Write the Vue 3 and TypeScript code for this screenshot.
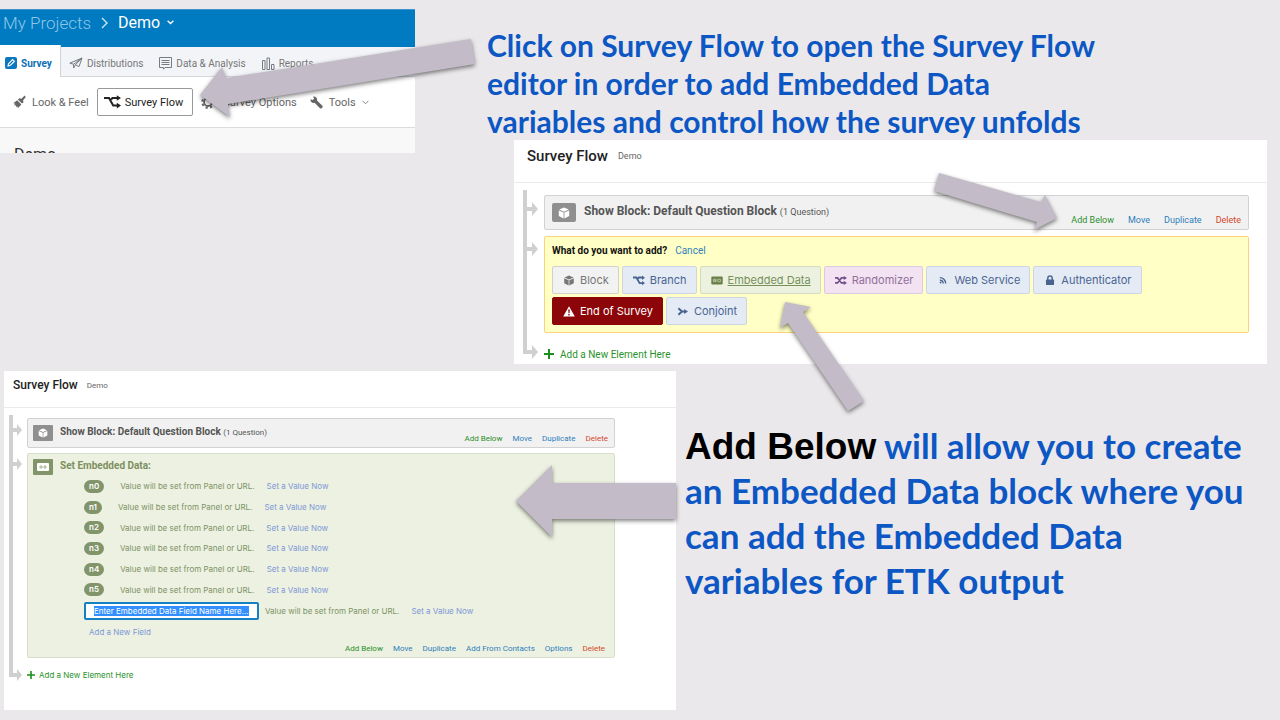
<script setup lang="ts">
import { onMounted, ref } from 'vue'

interface ElementKind {
  label: string
  icon: string
  tone: string
}

interface Action {
  label: string
  tone: string
}

const elementKinds: ElementKind[] = [
  { label: 'Block', icon: 'cube', tone: 'grey' },
  { label: 'Branch', icon: 'branch', tone: 'blue' },
  { label: 'Embedded Data', icon: 'data', tone: 'green' },
  { label: 'Randomizer', icon: 'shuffle', tone: 'pink' },
  { label: 'Web Service', icon: 'feed', tone: 'blue' },
  { label: 'Authenticator', icon: 'lock', tone: 'blue' },
  { label: 'End of Survey', icon: 'warning', tone: 'red' },
  { label: 'Conjoint', icon: 'conjoint', tone: 'blue' },
]

const blockActions: Action[] = [
  { label: 'Add Below', tone: 'add' },
  { label: 'Move', tone: 'plain' },
  { label: 'Duplicate', tone: 'plain' },
  { label: 'Delete', tone: 'delete' },
]

const dataActions: Action[] = [
  { label: 'Add Below', tone: 'add' },
  { label: 'Move', tone: 'plain' },
  { label: 'Duplicate', tone: 'plain' },
  { label: 'Add From Contacts', tone: 'plain' },
  { label: 'Options', tone: 'plain' },
  { label: 'Delete', tone: 'delete' },
]

const fields: string[] = ['n0', 'n1', 'n2', 'n3', 'n4', 'n5']
const newField = ref('Enter Embedded Data Field Name Here...')
const fieldInput = ref<HTMLInputElement | null>(null)

onMounted(() => {
  fieldInput.value?.focus({ preventScroll: true })
  fieldInput.value?.select()
})
</script>

<template>
  <main class="slide">
    <svg class="defs" width="0" height="0" aria-hidden="true">
      <symbol id="cube" viewBox="0 0 12 12">
        <path d="M6 0.6 10.9 2.6 6 4.8 1.1 2.6Z M0.8 3.5 5.6 5.6V11.4L0.8 9.1Z M11.2 3.5 6.4 5.6V11.4L11.2 9.1Z" fill="currentColor" />
      </symbol>
      <symbol id="branch" viewBox="0 0 12 10">
        <path d="M0 2H3.4L6.6 7.6H9.5M5 3.2 5.8 2H9.5" fill="none" stroke="currentColor" stroke-width="1.8" />
        <path d="M9 0 12 2.2 9 4.4Z M9 5.4 12 7.6 9 9.8Z" fill="currentColor" />
      </symbol>
      <symbol id="data" viewBox="0 0 12 10">
        <rect x="0.3" y="1" width="11.4" height="8" rx="1" fill="currentColor" />
        <path d="M2.4 3.8H5V6.2H2.4ZM3.4 5H5M6.8 3.8H9.4V6.2H6.8Z" fill="none" stroke="#dfe7cf" stroke-width="0.6" />
      </symbol>
      <symbol id="shuffle" viewBox="0 0 13 10">
        <path d="M0 2.2H2.8L7 7.6H10M0 7.6H2.8L7 2.2H10" fill="none" stroke="currentColor" stroke-width="1.8" />
        <path d="M9.5 0 13 2.2 9.5 4.4Z M9.5 5.4 13 7.6 9.5 9.8Z" fill="currentColor" />
      </symbol>
      <symbol id="feed" viewBox="0 0 12 12">
        <path d="M2.5 2.8C6 2.8 8.9 5.6 8.9 9.2M2.5 5.6C4.6 5.6 6.2 7.2 6.2 9.2" fill="none" stroke="currentColor" stroke-width="1.5" />
        <circle cx="3.4" cy="8.2" r="1" fill="currentColor" />
      </symbol>
      <symbol id="lock" viewBox="0 0 10 12">
        <path d="M2.6 5.5V3.6A2.4 2.4 0 0 1 7.4 3.6V5.5" fill="none" stroke="currentColor" stroke-width="1.6" />
        <rect x="0.6" y="5" width="8.8" height="6" rx="0.8" fill="currentColor" />
      </symbol>
      <symbol id="warning" viewBox="0 0 12 11">
        <path fill-rule="evenodd" d="M6 0.3 11.8 10.4H0.2ZM5.2 3.6 5.5 7.2H6.5L6.8 3.6ZM5.3 8H6.7V9.4H5.3Z" fill="currentColor" />
      </symbol>
      <symbol id="conjoint" viewBox="0 0 12 10">
        <path d="M1.4 1.8 5 5 1.4 8.2M4 5H8" fill="none" stroke="currentColor" stroke-width="2" />
        <path d="M7.2 2.4 11 5 7.2 7.6Z" fill="currentColor" />
      </symbol>
    </svg>

    <div class="top">
      <section class="project">
        <nav class="crumbs" aria-label="Breadcrumb">
          <a href="#projects" class="crumb-root">My Projects</a>
          <svg width="7" height="12" viewBox="0 0 7 12"><path d="M1 1 6 6 1 11" fill="none" stroke="#cfe6f5" stroke-width="1.4" /></svg>
          <button type="button" class="crumb-here">
            Demo
            <svg width="7" height="5" viewBox="0 0 7 5"><path d="M0.6 0.8 3.5 3.6 6.4 0.8" fill="none" stroke="#fff" stroke-width="1.4" /></svg>
          </button>
        </nav>
        <nav class="tabs" aria-label="Project sections">
          <a href="#survey" class="tab current">
            <svg width="12" height="12" viewBox="0 0 12 12"><rect width="12" height="12" rx="2" fill="#0b78bd" /><path d="M3 9 3.5 6.8 7.6 2.6 9.4 4.4 5.2 8.5Z" fill="none" stroke="#fff" stroke-width="1.1" /></svg>
            Survey
          </a>
          <a href="#distributions" class="tab">
            <svg width="14" height="12" viewBox="0 0 14 12"><path d="M0.8 6.2 13 1 10 9.6 6.4 7.8 13 1 4.6 7.2ZM4.6 7.2V11L6.4 7.8" fill="none" stroke="#777c84" stroke-width="1" /></svg>
            Distributions
          </a>
          <a href="#analysis" class="tab">
            <svg width="13" height="14" viewBox="0 0 13 14"><path d="M0.5 1.5H12.5V11.5H6L4.5 13.2V11.5H0.5ZM2.5 4.5H10.5M2.5 6.5H10.5M2.5 8.5H10.5" fill="none" stroke="#777c84" /></svg>
            Data &amp; Analysis
          </a>
          <a href="#reports" class="tab">
            <svg width="13" height="13" viewBox="0 0 13 13"><path d="M0.5 3.5H3V12.5H0.5ZM5 1H7.5V12.5H5ZM9.5 7.5H12V12.5H9.5Z" fill="none" stroke="#777c84" /></svg>
            Reports
          </a>
        </nav>
        <div class="tools">
          <button type="button" class="tool">
            <svg width="13" height="14" viewBox="0 0 13 14"><path d="M8.4 3.8 11.6 0.6 12.8 2 10 5.4 10.6 7.2 9 8.6 4.9 4.4 6.4 3.2ZM4.2 5.2 8.4 9.4 4.8 13.2 4.6 11.6 3.2 12 3 10.2 1.2 10.4 2 8.6 0.2 8.2Z" fill="#666" /></svg>
            Look &amp; Feel
          </button>
          <button type="button" class="tool boxed">
            <svg width="17" height="14" viewBox="0 0 17 14"><path d="M0 3H5L9.2 10.6H13.5M7.2 4.6 8.4 3H13.5" fill="none" stroke="#222" stroke-width="2" /><path d="M12.8 0.2 17 3 12.8 5.8ZM12.8 7.8 17 10.6 12.8 13.4Z" fill="#222" /></svg>
            Survey Flow
          </button>
          <button type="button" class="tool options">
            <svg width="14" height="14" viewBox="0 0 14 14"><circle cx="7" cy="7" r="4" fill="none" stroke="#666" stroke-width="1.8" /><circle cx="7" cy="7" r="5.8" fill="none" stroke="#666" stroke-width="2" stroke-dasharray="2.3 2.25" /></svg>
            Survey Options
          </button>
          <button type="button" class="tool">
            <svg width="13" height="13" viewBox="0 0 13 13"><path d="M0.6 3.2 2.8 4 4 2.8 3.2 0.6C5.6 0 7.6 2 7 4.4L12.4 9.8C13.2 11.4 11.6 13 10 12.2L4.6 6.8C2.2 7.6 0 5.6 0.6 3.2Z" fill="#666" /></svg>
            Tools
            <svg width="7" height="5" viewBox="0 0 7 5"><path d="M0.6 0.8 3.5 3.8 6.4 0.8" fill="none" stroke="#888" /></svg>
          </button>
        </div>
        <h2 class="project-name">Demo</h2>
      </section>

      <div class="intro">
        <p class="note">
          Click on Survey Flow to open the Survey Flow<br />
          editor in order to add Embedded Data<br />
          variables and control how the survey unfolds
        </p>

        <section class="panel adding">
          <header class="panel-head">
            <h2>Survey Flow</h2>
            <span>Demo</span>
          </header>
          <div class="tree">
            <svg class="rail" width="16" height="172" viewBox="0 0 16 172" aria-hidden="true">
              <path d="M2 0V162H10M2 19H10M2 59H10" fill="none" stroke="#d0d0d0" stroke-width="4" />
              <path d="M9 12 15 19 9 26ZM9 52 15 59 9 66ZM9 155 15 162 9 169Z" fill="#d0d0d0" />
            </svg>
            <div class="nodes">
              <article class="block">
                <span class="badge"><svg width="12" height="12"><use href="#cube" /></svg></span>
                <h3>Show Block: Default Question Block <small>(1 Question)</small></h3>
                <div class="actions">
                  <a v-for="a in blockActions" :key="a.label" href="#" :class="a.tone">{{ a.label }}</a>
                </div>
              </article>
              <article class="chooser">
                <p class="ask"><strong>What do you want to add?</strong><a href="#cancel">Cancel</a></p>
                <div class="kinds">
                  <button v-for="k in elementKinds" :key="k.label" type="button" class="kind" :class="k.tone">
                    <svg width="12" height="11"><use :href="'#' + k.icon" /></svg>
                    <span>{{ k.label }}</span>
                  </button>
                </div>
              </article>
              <a href="#new" class="add-element">
                <svg width="10" height="10" viewBox="0 0 10 10"><path d="M5 0V10M0 5H10" stroke="#1b8f1b" stroke-width="2" /></svg>
                Add a New Element Here
              </a>
            </div>
          </div>
        </section>
      </div>
    </div>

    <div class="bottom">
      <section class="panel small">
        <header class="panel-head">
          <h2>Survey Flow</h2>
          <span>Demo</span>
        </header>
        <div class="tree">
          <svg class="rail" width="14" height="270" viewBox="0 0 14 270" aria-hidden="true">
            <path d="M2 0V260H9M2 15H9M2 49H9" fill="none" stroke="#d0d0d0" stroke-width="4" />
            <path d="M8 9 13 15 8 21ZM8 43 13 49 8 55ZM8 254 13 260 8 266Z" fill="#d0d0d0" />
          </svg>
          <div class="nodes">
            <article class="block">
              <span class="badge"><svg width="10" height="10"><use href="#cube" /></svg></span>
              <h3>Show Block: Default Question Block <small>(1 Question)</small></h3>
              <div class="actions">
                <a v-for="a in blockActions" :key="a.label" href="#" :class="a.tone">{{ a.label }}</a>
              </div>
            </article>
            <article class="embedded">
              <div class="embedded-head">
                <span class="badge"><svg width="12" height="8" viewBox="0 0 12 8"><rect width="12" height="8" rx="1" fill="#fff" /><path d="M3 3H5V5H3ZM7 3H9V5H7Z" fill="none" stroke="#8a9b6c" stroke-width="0.7" /></svg></span>
                <h3>Set Embedded Data:</h3>
              </div>
              <ul class="fields">
                <li v-for="f in fields" :key="f">
                  <span class="pill">{{ f }}</span>
                  <span class="value">Value will be set from Panel or URL.</span>
                  <a href="#value">Set a Value Now</a>
                </li>
                <li class="editing">
                  <input ref="fieldInput" v-model="newField" type="text" aria-label="Field name" />
                  <span class="value">Value will be set from Panel or URL.</span>
                  <a href="#value">Set a Value Now</a>
                </li>
              </ul>
              <a href="#field" class="add-field">Add a New Field</a>
              <div class="actions">
                <a v-for="a in dataActions" :key="a.label" href="#" :class="a.tone">{{ a.label }}</a>
              </div>
            </article>
            <a href="#new" class="add-element">
              <svg width="8" height="8" viewBox="0 0 8 8"><path d="M4 0V8M0 4H8" stroke="#1b8f1b" stroke-width="1.6" /></svg>
              Add a New Element Here
            </a>
          </div>
        </div>
      </section>

      <p class="note large">
        <b>Add Below</b> will allow you to create<br />
        an Embedded Data block where you<br />
        can add the Embedded Data<br />
        variables for ETK output
      </p>
    </div>

    <svg class="arrows" viewBox="0 0 1280 720" preserveAspectRatio="none" aria-hidden="true">
      <g fill="#c3bbc7">
        <path d="M200 95 222 67 226 78 471 39 475 64 228 104 230 117Z" />
        <path d="M939 173 1041 202 1045 195 1057 218 1034 230 1037 222 934 191Z" />
        <path d="M785 302 811 307 803 312 864 401 848 411 788 323 780 328Z" />
        <path d="M516 501 552 465V483H676V519H552V537Z" />
      </g>
    </svg>
  </main>
</template>

<style>
body {
  background: #ebe8eb;
}
</style>

<style scoped>
* {
  box-sizing: border-box;
}

.slide {
  position: relative;
  min-height: 100vh;
  padding-top: 9px;
  overflow: hidden;
  background: #ebe8eb;
  font-family: Roboto, "Liberation Sans", sans-serif;
  color: #333;
}

.defs {
  position: absolute;
}

h2,
h3,
p,
ul {
  margin: 0;
  padding: 0;
  list-style: none;
}

a {
  color: #2f7fbd;
  text-decoration: none;
}

button {
  font: inherit;
  cursor: pointer;
}

svg {
  flex: none;
}

.top {
  display: grid;
  grid-template-columns: 415fr 865fr;
  align-items: start;
}

.project {
  height: 144px;
  overflow: hidden;
  background: #f8f8f8;
}

.crumbs {
  display: flex;
  align-items: center;
  gap: 10px;
  height: 38px;
  padding: 0 3px 12px;
  background: #007ac0;
  border-top: 1px solid #3d94cb;
}

.crumb-root {
  font-size: 17px;
  font-weight: 300;
  color: #8fc6e8;
}

.crumb-here {
  display: flex;
  align-items: center;
  gap: 7px;
  padding: 0;
  border: 0;
  background: none;
  font-size: 16px;
  color: #fff;
}

.tabs {
  display: flex;
  height: 30px;
  background: #f2f4f8;
  border-bottom: 1px solid #d6d8dc;
}

.tab {
  display: flex;
  align-items: center;
  gap: 4px;
  padding: 3px 8px 0;
  font-size: 10px;
  color: #777;
}

.tab.current {
  height: 32px;
  margin-top: -2px;
  padding: 4px 8px 0 5px;
  background: #fff;
  border-right: 1px solid #cfd2d6;
  font-weight: 700;
  color: #0b70b5;
}

.tools {
  display: flex;
  align-items: center;
  gap: 8px;
  height: 51px;
  padding-left: 13px;
  background: #fff;
  border-bottom: 1px solid #dcdcdc;
}

.tool {
  display: flex;
  align-items: center;
  gap: 6px;
  padding: 0;
  border: 0;
  background: none;
  font-size: 11px;
  color: #666;
  white-space: nowrap;
}

.tool.boxed {
  height: 28px;
  padding: 0 9px 0 6px;
  gap: 4px;
  border: 1px solid #999;
  border-radius: 2px;
  color: #222;
}

.tool.options {
  gap: 8px;
  margin-right: 5px;
}

.project-name {
  padding: 17px 14px 0;
  font-size: 16px;
  line-height: 20px;
  font-weight: 400;
}

.intro {
  padding: 17px 13px 0 72px;
}

.note {
  font-family: Lato, "Liberation Sans", sans-serif;
  font-weight: 700;
  font-size: 30px;
  line-height: 38px;
  color: #0c57c4;
  white-space: nowrap;
}

.note.large {
  padding: 52px 0 0 9px;
  font-size: 35px;
  line-height: 45px;
}

.note b {
  font-family: "Liberation Sans", sans-serif;
  font-weight: 700;
  font-size: 37px;
  line-height: 1px;
  color: #000;
}

.panel {
  background: #fff;
}

.adding {
  height: 224px;
  margin-left: 27px;
}

.panel-head {
  display: flex;
  align-items: center;
  gap: 10px;
  height: 43px;
  padding: 0 13px 10px;
  border-bottom: 1px solid #ebebeb;
}

.panel-head h2 {
  font-size: 15px;
  font-weight: 500;
  color: #222;
}

.panel-head span {
  font-size: 9px;
  color: #666;
}

.tree {
  display: flex;
  gap: 5px;
  padding: 7px 18px 0 9px;
}

.nodes {
  flex: 1;
  min-width: 0;
  padding-top: 5px;
}

.block {
  display: flex;
  gap: 8px;
  height: 35px;
  padding: 7px 7px 0;
  background: #f1f1f1;
  border: 1px solid #d2d2d2;
  border-radius: 2px;
}

.badge {
  display: flex;
  align-items: center;
  justify-content: center;
  width: 24px;
  height: 19px;
  background: #8f8f8f;
  border-radius: 2px;
  color: #fff;
}

.block h3 {
  font-size: 12px;
  line-height: 17px;
  color: #555;
  white-space: nowrap;
}

.block small {
  font-size: 9px;
  font-weight: 400;
}

.actions {
  display: flex;
  gap: 14px;
  margin-left: auto;
  align-self: flex-end;
  font-size: 9px;
  line-height: 12px;
  padding-bottom: 3px;
  white-space: nowrap;
}

.actions .add {
  color: #2a8f2a;
}

.actions .delete {
  color: #d2492a;
}

.chooser {
  height: 97px;
  margin-top: 6px;
  padding: 7px;
  background: #ffffc6;
  border: 1px solid #fbd37c;
  border-radius: 2px;
}

.ask {
  display: flex;
  gap: 8px;
  font-size: 10px;
  line-height: 14px;
  color: #111;
}

.kinds {
  display: flex;
  flex-wrap: wrap;
  gap: 3px;
  max-width: 600px;
  margin-top: 8px;
}

.kind {
  display: flex;
  align-items: center;
  gap: 5px;
  height: 28px;
  padding: 0 9px 0 10px;
  border: 1px solid #cdd5e2;
  border-radius: 2px;
  background: #e4ebf5;
  font-family: Inter, Roboto, sans-serif;
  font-size: 11px;
  color: #4a6491;
}

.kind.grey {
  background: #f2f2f2;
  border-color: #d0d0d0;
  color: #777;
}

.kind.green {
  background: #edf2e0;
  border-color: #d3dbc0;
  color: #78905c;
}

.kind.green svg {
  color: #6b8048;
}

.kind.green span {
  text-decoration: underline;
}

.kind.pink {
  background: #f3e2f2;
  border-color: #dccbe0;
  color: #90709c;
}

.kind.pink svg {
  color: #72508a;
}

.kind.red {
  background: #8c0508;
  border-color: #8c0508;
  color: #fff;
}

.add-element {
  display: flex;
  align-items: center;
  gap: 6px;
  height: 14px;
  margin-top: 14px;
  font-size: 10px;
  color: #2a922a;
}

.bottom {
  display: grid;
  grid-template-columns: 672fr 604fr;
  align-items: start;
  margin-top: 7px;
  padding-left: 4px;
}

.small {
  height: 339px;
}

.small .panel-head {
  gap: 9px;
  height: 37px;
  padding: 0 9px 8px;
}

.small .panel-head h2 {
  font-size: 12px;
}

.small .panel-head span {
  font-size: 8px;
}

.small .tree {
  gap: 4px;
  padding: 7px 61px 0 5px;
}

.small .nodes {
  padding-top: 3px;
}

.small .block {
  gap: 7px;
  height: 30px;
  padding: 6px 6px 0 5px;
}

.small .badge {
  width: 20px;
  height: 16px;
  border-radius: 1px;
}

.small h3 {
  font-size: 10px;
  line-height: 14px;
}

.small small {
  font-size: 8px;
}

.small .actions {
  gap: 10px;
  font-size: 8px;
  line-height: 10px;
  padding-bottom: 3px;
}

.embedded {
  display: flex;
  flex-direction: column;
  height: 205px;
  margin-top: 5px;
  padding: 5px 9px 0 5px;
  background: #ecf1e1;
  border: 1px solid #d8dfc8;
  border-radius: 2px;
}

.embedded-head {
  display: flex;
  gap: 7px;
}

.embedded-head .badge {
  background: #82946a;
}

.embedded-head h3 {
  color: #7c8f60;
}

.fields {
  display: grid;
  grid-auto-rows: 1fr;
  height: 145px;
  margin: 1px 0 0 51px;
  font-family: Inter, Roboto, sans-serif;
  font-size: 8px;
  color: #7f9166;
}

.fields li {
  display: flex;
  align-items: center;
  white-space: nowrap;
}

.fields a,
.add-field {
  color: #8098d8;
}

.pill {
  padding: 0 5px;
  margin-right: 16px;
  border-radius: 7px;
  background: #82946a;
  font-weight: 600;
  line-height: 13px;
  color: #fff;
}

.value {
  margin-right: 12px;
}

.editing input {
  width: 175px;
  height: 18px;
  margin-right: 6px;
  padding: 0 8px;
  border: 2px solid #1580c4;
  border-radius: 2px;
  outline: 0;
  background: #fff;
  font: inherit;
  color: #444;
}

.editing input::selection {
  background: #338fff;
  color: #fff;
}

.add-field {
  margin: 6px 0 0 56px;
  font-family: Inter, Roboto, sans-serif;
  font-size: 8px;
  line-height: 10px;
}

.embedded .actions {
  margin-top: auto;
}

.small .add-element {
  margin-top: 10px;
  gap: 4px;
  font-family: Inter, Roboto, sans-serif;
  font-size: 8px;
}

.arrows {
  position: absolute;
  inset: 0;
  width: 100%;
  height: 100%;
  pointer-events: none;
  filter: drop-shadow(0 2px 2px rgba(0, 0, 0, 0.5));
}
</style>
